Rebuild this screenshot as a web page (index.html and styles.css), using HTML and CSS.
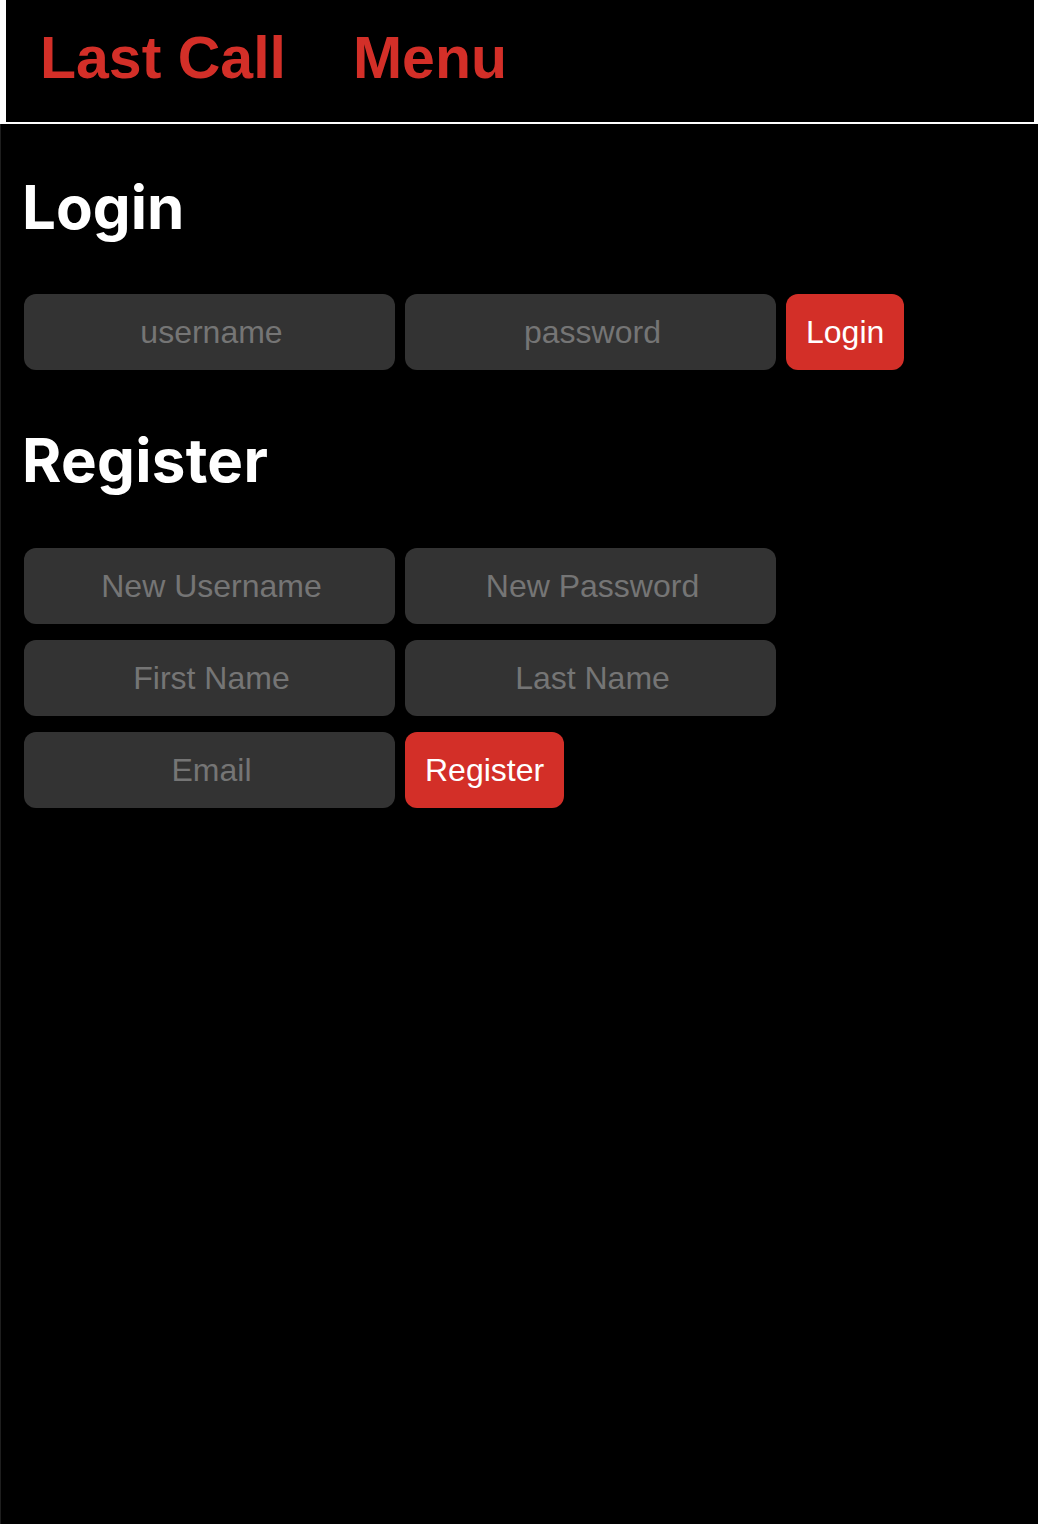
FILE: index.html
```html
<!DOCTYPE html>
<html lang="en">
<head>
<meta charset="utf-8">
<title>Last Call</title>
<link rel="stylesheet" href="styles.css">
</head>
<body>
<header class="topbar">
  <span class="brand">Last Call</span>
  <span class="brand">Menu</span>
</header>
<main class="main">
  <h1 class="title">Login</h1>
  <div class="row">
    <input class="field" type="text" placeholder="username">
    <input class="field" type="password" placeholder="password">
    <button class="btn" type="button">Login</button>
  </div>
  <h1 class="title title-reg">Register</h1>
  <div class="stack">
    <div class="row">
      <input class="field" type="text" placeholder="New Username">
      <input class="field" type="password" placeholder="New Password">
    </div>
    <div class="row">
      <input class="field" type="text" placeholder="First Name">
      <input class="field" type="text" placeholder="Last Name">
    </div>
    <div class="row">
      <input class="field" type="email" placeholder="Email">
      <button class="btn" type="button">Register</button>
    </div>
  </div>
</main>
</body>
</html>
```

FILE: styles.css
```css
html, body {
  margin: 0;
  padding: 0;
  background: #ffffff;
}

.topbar {
  margin: 0 4px 2px 6px;
  height: 122px;
  box-sizing: border-box;
  background: #000000;
  display: flex;
  align-items: center;
  gap: 67px;
  padding: 0 0 6px 34px;
}

.brand {
  font-family: "Liberation Sans", Arial, sans-serif;
  font-weight: 700;
  font-size: 59px;
  color: #d32f28;
}

.main {
  background: #000000;
  border-left: 1px solid #1e1e1e;
  min-height: 1400px;
  padding: 47px 0 0 23px;
  box-sizing: border-box;
}

.title {
  margin: 0 0 51px -2px;
  font-family: Inter, "Noto Sans", sans-serif;
  font-weight: 700;
  font-size: 60px;
  line-height: 72px;
  color: #ffffff;
}

.title-reg {
  margin-top: 54px;
  margin-bottom: 52px;
  letter-spacing: 0.3px;
}

.row {
  display: flex;
  gap: 10px;
}

.stack {
  display: flex;
  flex-direction: column;
  gap: 16px;
}

.field {
  width: 371px;
  height: 76px;
  box-sizing: border-box;
  border: none;
  border-radius: 12px;
  background: #333333;
  color: #ffffff;
  text-align: center;
  font-family: "Liberation Sans", Arial, sans-serif;
  font-size: 32px;
  padding: 0 4px 0 8px;
  outline: none;
}

.field::placeholder {
  color: #757575;
  opacity: 1;
}

.btn {
  height: 76px;
  box-sizing: border-box;
  border: none;
  border-radius: 12px;
  background: #d32f28;
  color: #ffffff;
  font-family: "Liberation Sans", Arial, sans-serif;
  font-size: 32px;
  padding: 0 20px;
  cursor: pointer;
}
```
